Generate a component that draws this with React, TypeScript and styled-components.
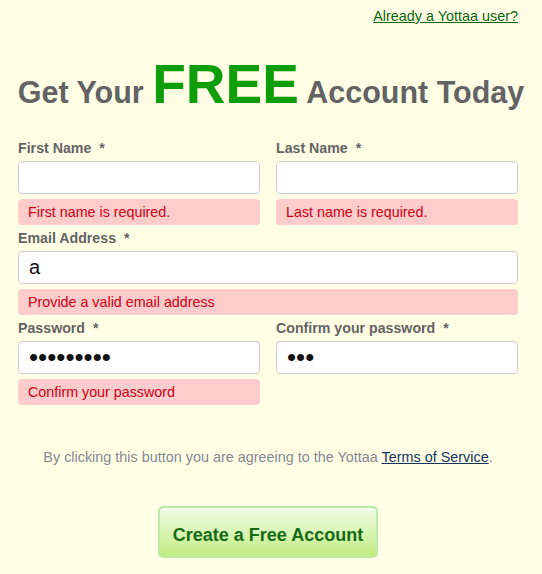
import React from "react";
import styled, { createGlobalStyle } from "styled-components";

const GlobalStyle = createGlobalStyle`
  body {
    margin: 0;
    background-color: #ffffe6;
    font-family: "Liberation Sans", Arial, sans-serif;
  }
`;

const App = () => {
  return (
    <Page>
      <GlobalStyle />
      <TopLink href="#">Already a Yottaa user?</TopLink>
      <Heading>
        Get Your <Free>FREE</Free> Account Today
      </Heading>

      <Form onSubmit={(e) => e.preventDefault()}>
        <Field>
          <Label>
            First Name <Star>*</Star>
          </Label>
          <Input type="text" />
          <Error>First name is required.</Error>
        </Field>
        <Field>
          <Label>
            Last Name <Star>*</Star>
          </Label>
          <Input type="text" />
          <Error>Last name is required.</Error>
        </Field>

        <Field wide>
          <Label>
            Email Address <Star>*</Star>
          </Label>
          <Input type="text" defaultValue="a" />
          <Error>Provide a valid email address</Error>
        </Field>

        <Field>
          <Label>
            Password <Star>*</Star>
          </Label>
          <Input type="password" masked defaultValue="123456789" />
          <Error>Confirm your password</Error>
        </Field>
        <Field>
          <Label>
            Confirm your password <Star>*</Star>
          </Label>
          <Input type="password" masked defaultValue="123" />
        </Field>

        <Terms>
          By clicking this button you are agreeing to the Yottaa{" "}
          <TermsLink href="#">Terms of Service</TermsLink>.
        </Terms>

        <ButtonHold>
          <Button type="submit">Create a Free Account</Button>
        </ButtonHold>
      </Form>
    </Page>
  );
};

export default App;

const Page = styled.div`
  width: 542px;
  height: 574px;
  display: flex;
  flex-direction: column;
`;

const TopLink = styled.a`
  align-self: flex-end;
  margin: 8px 24px 0 0;
  font-size: 14.4px;
  line-height: 16px;
  color: #0b640b;
  text-decoration: underline;
`;

const Heading = styled.h1`
  margin: 30px 0 0 0;
  text-align: center;
  font-size: 30.5px;
  line-height: 60px;
  font-weight: 700;
  color: #636363;
  white-space: nowrap;
`;

const Free = styled.span`
  font-size: 55px;
  color: #0e9e0a;
`;

const Form = styled.form`
  margin: 17px 0 0 18px;
  width: 500px;
  display: grid;
  grid-template-columns: 242px 242px;
  column-gap: 16px;
  row-gap: 4px;
  align-items: start;
`;

const Field = styled.div<{ wide?: boolean }>`
  display: flex;
  flex-direction: column;
  grid-column: ${(p) => (p.wide ? "1 / 3" : "auto")};
`;

const Label = styled.label`
  font-size: 14.2px;
  line-height: 18px;
  font-weight: 700;
  color: #636363;
  margin-bottom: 4px;
`;

const Star = styled.span`
  margin-left: 4px;
`;

const Input = styled.input<{ masked?: boolean }>`
  box-sizing: border-box;
  width: 100%;
  height: 33px;
  border: 1px solid #cfcfcf;
  border-radius: 4px;
  background-color: #ffffff;
  padding: 0 10px;
  font-family: "Liberation Sans", Arial, sans-serif;
  font-size: ${(p) => (p.masked ? "26px" : "20px")};
  color: #111;
  outline: none;
`;

const Error = styled.div`
  margin-top: 5px;
  height: 26px;
  line-height: 26px;
  padding: 0 10px;
  border-radius: 4px;
  background-color: #ffcccc;
  color: #cc0014;
  font-size: 14.3px;
`;

const Terms = styled.p`
  grid-column: 1 / 3;
  margin: 39px 0 0 0;
  text-align: center;
  font-size: 14.4px;
  line-height: 18px;
  color: #858890;
`;

const TermsLink = styled.a`
  color: #14335e;
  text-decoration: underline;
`;

const ButtonHold = styled.div`
  grid-column: 1 / 3;
  display: flex;
  justify-content: center;
  margin-top: 36px;
`;

const Button = styled.button`
  box-sizing: border-box;
  width: 220px;
  height: 52px;
  padding: 6px 0 0 0;
  border: 2px solid #bfeaa6;
  border-radius: 5px;
  background: linear-gradient(to bottom, #f0fbe6 0%, #d9f5b6 50%, #c1ec80 100%);
  font-family: "Liberation Sans", Arial, sans-serif;
  font-size: 18px;
  font-weight: 700;
  color: #166a16;
  cursor: pointer;
`;
